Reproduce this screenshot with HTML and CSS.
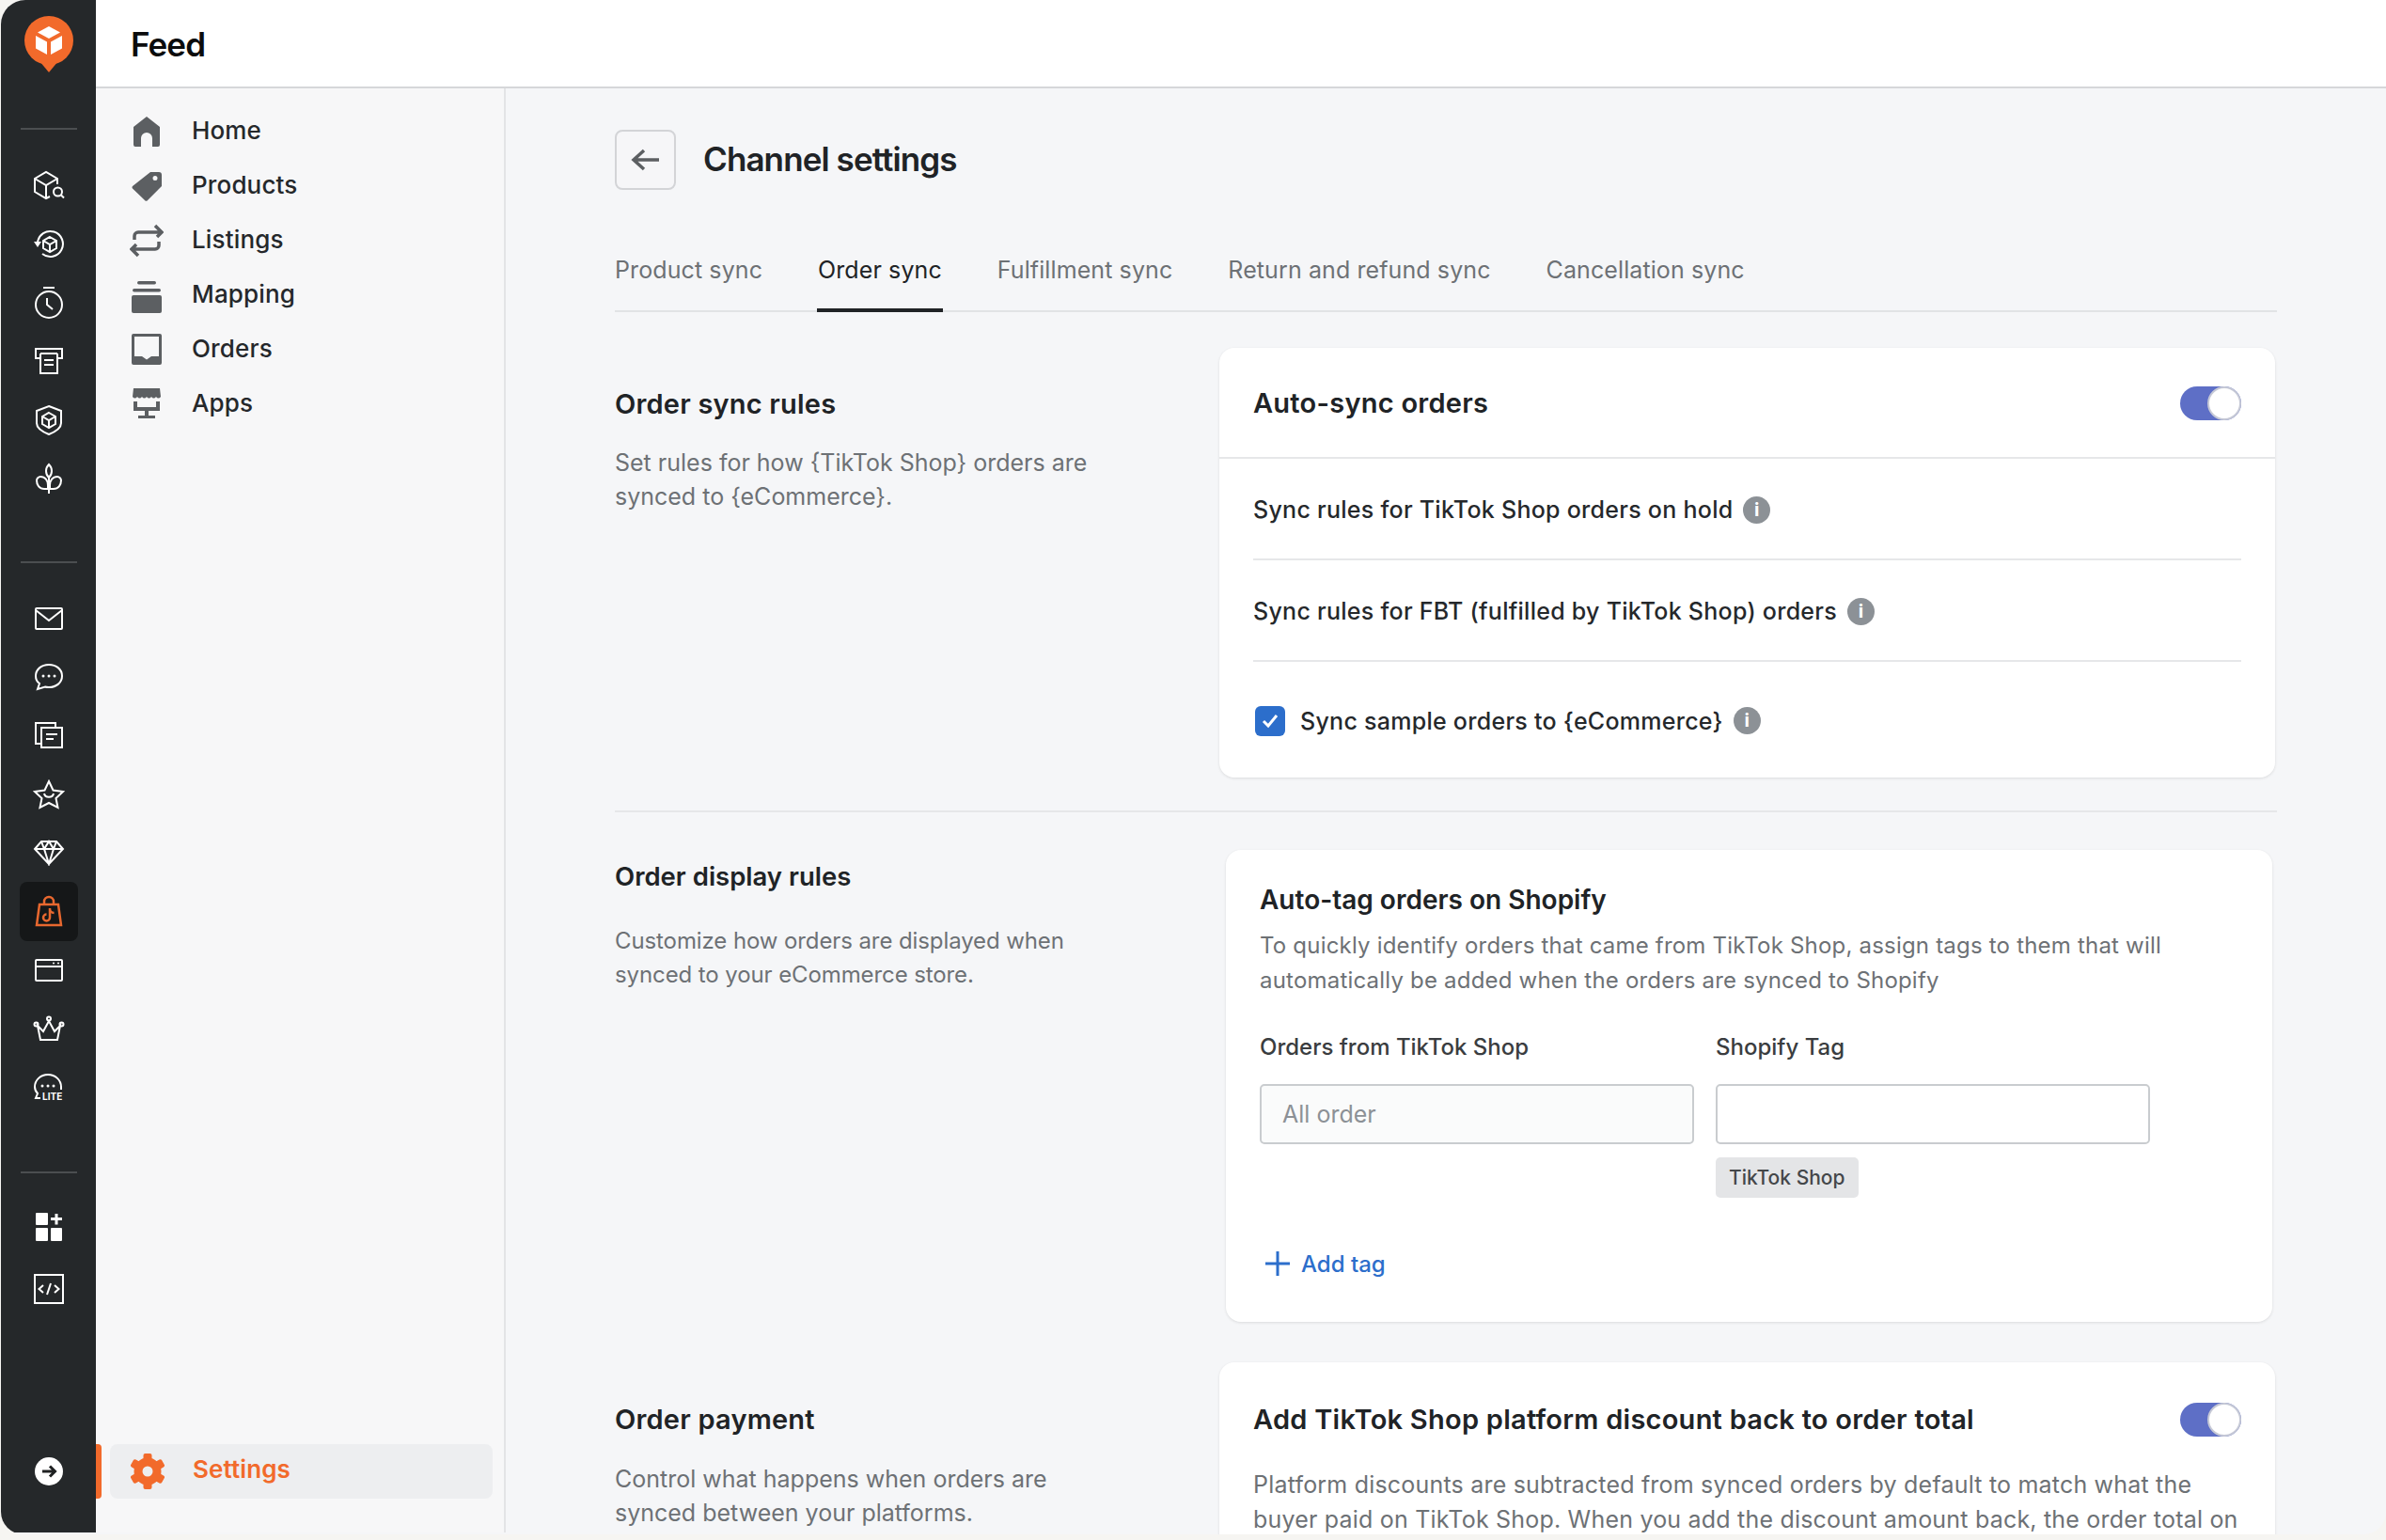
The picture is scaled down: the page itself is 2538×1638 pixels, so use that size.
FILE: index.html
```html
<!DOCTYPE html>
<html lang="en">
<head>
<meta charset="utf-8">
<title>Channel settings</title>
<link rel="stylesheet" href="styles.css">
</head>
<body>
<div class="frame">
  <nav class="rail">
    <div class="logo">
      <svg width="52" height="60" viewBox="0 0 52 60"><circle cx="26" cy="26" r="26" fill="#f26a2b"/><path d="M16 48L26 60L36 48Z" fill="#f26a2b"/><path d="M26 11L38 17.5L26 24L14 17.5Z" fill="#fff"/><path d="M12 21L24 27.5V41L12 34.5Z" fill="#fff"/><path d="M40 21L28 27.5V41L40 34.5Z" fill="#fff"/></svg>
    </div>
    <div class="rule rule-first"></div>
    <div class="rail-group">
      <a class="rail-btn"><svg class="ri ri-shift" width="36" height="32" viewBox="0 0 36 32"><path d="M26 15V9L14 2L2 9V23L14 30L18 28M2 9L14 16L26 9M14 16V30"/><circle cx="26.500" cy="23" r="4.500"/><path d="M30 26.500L33 29.500"/></svg></a>
      <a class="rail-btn"><svg class="ri" width="36" height="32" viewBox="0 0 36 32"><path d="M6 14A13.500 13.500 0 1 1 11 26"/><path d="M2 13H10L6 19Z" class="solid"/><path d="M19 8L26 12V20L19 24L12 20V12ZM12 12L19 16L26 12M19 16V24"/></svg></a>
      <a class="rail-btn"><svg class="ri" width="32" height="36" viewBox="0 0 32 36"><path d="M10 2H22"/><circle cx="16" cy="20" r="14"/><path d="M14 13V20L20 25"/></svg></a>
      <a class="rail-btn"><svg class="ri" width="32" height="32" viewBox="0 0 32 32"><path d="M7 13H2V3H30V13H25M7 8H25M7 8V29H25V8M11 15H21M11 20H21"/></svg></a>
      <a class="rail-btn"><svg class="ri" width="30" height="34" viewBox="0 0 30 34"><path d="M15 2L28 7V20C28 26 20 30 15 32C10 30 2 26 2 20V7Z"/><path d="M15 9L22 13V21L15 25L8 21V13ZM8 13L15 17L22 13M15 17V25"/></svg></a>
      <a class="rail-btn"><svg class="ri" width="30" height="34" viewBox="0 0 30 34"><path d="M15 2C11 6 11 12 15 16C19 12 19 6 15 2ZM15 16V33M14 28H10C5 28 2 24 2 19C2 17 4 15 6 15C11 15 14 19 14 24ZM16 28H20C25 28 28 24 28 19C28 17 26 15 24 15C19 15 16 19 16 24Z"/></svg></a>
    </div>
    <div class="rule rule-mid"></div>
    <div class="rail-group rail-group-tight">
      <a class="rail-btn"><svg class="ri" width="32" height="26" viewBox="0 0 32 26"><rect x="2" y="2" width="28" height="22" rx="1"/><path d="M2 4L16 15L30 4"/></svg></a>
      <a class="rail-btn"><svg class="ri" width="32" height="32" viewBox="0 0 32 32"><path d="M16 3C8 3 2 8 2 15C2 18 3 21 6 23L4 29L12 26.500C13 27 15 27 16 27C24 27 30 22 30 15C30 8 24 3 16 3Z"/><circle cx="10" cy="15" r="1.500" class="solid"/><circle cx="16" cy="15" r="1.500" class="solid"/><circle cx="22" cy="15" r="1.500" class="solid"/></svg></a>
      <a class="rail-btn"><svg class="ri" width="32" height="30" viewBox="0 0 32 30"><path d="M7 24H2V2H23V7"/><rect x="8" y="7" width="22" height="21"/><path d="M13 14H25M13 19H21"/></svg></a>
      <a class="rail-btn"><svg class="ri" width="34" height="32" viewBox="0 0 34 32"><path d="M17 2L21.500 11.500L32 13L24.500 20L26.500 30L17 25L7.500 30L9.500 20L2 13L12.500 11.500Z"/><path d="M12 15C13 20 21 20 22 15"/></svg></a>
      <a class="rail-btn"><svg class="ri" width="34" height="28" viewBox="0 0 34 28"><path d="M9 2H25L32 10L17 26L2 10ZM2 10H32M12 10L17 26L22 10L17 2ZM9 2L12 10M25 2L22 10"/></svg></a>
      <a class="rail-btn rail-btn-active"><svg class="ri ri-active" width="30" height="36" viewBox="0 0 30 36"><path d="M5 11H25L28 33H2Z"/><path d="M10 11V8A5 5 0 0 1 20 8V11"/><path d="M16 15V25A3.500 3.500 0 1 1 12.500 21.500M16 15.500C16 18 18 20 20.500 20"/></svg></a>
      <a class="rail-btn"><svg class="ri" width="32" height="26" viewBox="0 0 32 26"><rect x="2" y="2" width="28" height="22" rx="1"/><path d="M2 9H30"/><circle cx="21" cy="5.500" r="1" class="solid"/><circle cx="26" cy="5.500" r="1" class="solid"/></svg></a>
      <a class="rail-btn"><svg class="ri" width="34" height="28" viewBox="0 0 34 28"><path d="M5 11L11 17L17 6L23 17L29 11L26 26H8Z"/><circle cx="3.500" cy="9.500" r="2" /><circle cx="17" cy="3.500" r="2"/><circle cx="30.500" cy="9.500" r="2"/></svg></a>
      <a class="rail-btn"><svg class="ri" width="34" height="32" viewBox="0 0 34 32"><path d="M8 27H3L5 22C3 20 2 17 2 15C2 8 8 2 16 2C24 2 30 8 30 15V18"/><circle cx="10" cy="14" r="1.500" class="solid"/><circle cx="16" cy="14" r="1.500" class="solid"/><circle cx="22" cy="14" r="1.500" class="solid"/><text x="10" y="29" class="lite">LITE</text></svg></a>
    </div>
    <div class="rule rule-last"></div>
    <a class="rail-btn rail-btn-apps"><svg width="30" height="30" viewBox="0 0 30 30" class="rs"><rect x="1" y="0" width="13" height="13" rx="1"/><rect x="1" y="16" width="13" height="14" rx="1"/><rect x="17" y="16" width="12" height="14" rx="1"/><path d="M21.500 1H24.500V5H29V8H24.500V12.500H21.500V8H17V5H21.500Z"/></svg></a>
    <a class="rail-btn rail-btn-code"><svg class="ri" width="32" height="32" viewBox="0 0 32 32"><rect x="1" y="1" width="30" height="30"/><path d="M10 12L5.500 16L10 20M22 12L26.500 16L22 20M18 10L14 22"/></svg></a>
    <div class="rail-end"><svg width="30" height="30" viewBox="0 0 30 30"><circle cx="15" cy="15" r="15" fill="#fff"/><path d="M8 15H21M16 9.500L21.500 15L16 20.500" fill="none" stroke="#202223" stroke-width="3"/></svg></div>
  </nav>
  <div class="body">
    <header class="topbar"><h1 class="brand">Feed</h1></header>
    <div class="work">
      <aside class="side">
        <ul class="side-list">
          <li class="side-item"><svg class="si" width="32" height="32" viewBox="0 0 32 32"><path d="M16 0L30 11V30A2 2 0 0 1 28 32H22V23A6 6 0 0 0 10 23V32H4A2 2 0 0 1 2 30V11Z"/></svg><span>Home</span></li>
          <li class="side-item"><svg class="si" width="32" height="32" viewBox="0 0 32 32"><path fill-rule="evenodd" d="M20 1H29A3 3 0 0 1 32 4V16L17 31A2 2 0 0 1 14 31L1 18.500A2 2 0 0 1 1 16ZM25 5A2.500 2.500 0 1 0 25 10A2.500 2.500 0 1 0 25 5Z"/></svg><span>Products</span></li>
          <li class="side-item"><svg class="sl" width="36" height="36" viewBox="0 0 36 36"><path d="M5 17V13A4 4 0 0 1 9 9H33M27 2L34 9L29 14M31 19V23A4 4 0 0 1 27 27H3M9 34L2 27L7 22"/></svg><span>Listings</span></li>
          <li class="side-item"><svg class="si si-low" width="32" height="34" viewBox="0 0 32 34"><rect x="6" y="0" width="20" height="3.500" rx="1.700"/><rect x="1" y="8" width="30" height="3.500" rx="1.700"/><rect x="0" y="15" width="32" height="19" rx="2"/></svg><span>Mapping</span></li>
          <li class="side-item"><svg class="si" width="32" height="33" viewBox="0 0 32 33"><path fill-rule="evenodd" d="M2 0H30A2 2 0 0 1 32 2V31A2 2 0 0 1 30 33H2A2 2 0 0 1 0 31V2A2 2 0 0 1 2 0ZM3 3V24H11L16 27.500L21 24H29V3Z"/></svg><span>Orders</span></li>
          <li class="side-item"><svg class="si" width="32" height="33" viewBox="0 0 32 33"><path d="M2 0H30L31 9Q28.500 12 26 9Q23.500 12 21 9Q18.500 12 16 9Q13.500 12 11 9Q8.500 12 6 9Q3.500 12 1 9Z"/><path d="M2 14H6V20H26V14H30V24H18V29H25V32H7V29H14V24H2Z"/></svg><span>Apps</span></li>
        </ul>
        <div class="side-settings">
          <span class="side-mark"></span>
          <div class="side-active"><svg width="36" height="38" viewBox="0 0 36 38" class="gear"><g><rect x="13.500" y="0" width="9" height="38" rx="2"/><rect x="13.500" y="0" width="9" height="38" rx="2" transform="rotate(60 18 19)"/><rect x="13.500" y="0" width="9" height="38" rx="2" transform="rotate(120 18 19)"/></g><circle cx="18" cy="19" r="10" fill="none" stroke="#f26a2b" stroke-width="9"/><circle cx="18" cy="19" r="5.500" fill="#edeef0"/></svg><span class="side-label">Settings</span></div>
        </div>
      </aside>
      <main class="main">
        <div class="page-head">
          <button class="back"><svg width="32" height="26" viewBox="0 0 32 26"><path d="M30 13H4M14 3L3 13L14 23" fill="none" stroke="#5c5f62" stroke-width="3.500"/></svg></button>
          <h2 class="page-title">Channel settings</h2>
        </div>
        <div class="tabs">
          <span class="tab">Product sync</span>
          <span class="tab tab-on">Order sync</span>
          <span class="tab">Fulfillment sync</span>
          <span class="tab">Return and refund sync</span>
          <span class="tab">Cancellation sync</span>
        </div>

        <section class="sec sec-one">
          <div class="sec-left sec-left-one">
            <h3 class="sec-title">Order sync rules</h3>
            <p class="sec-desc">Set rules for how {TikTok Shop} orders are<br>synced to {eCommerce}.</p>
          </div>
          <div class="card">
            <div class="card-head"><h3 class="card-title">Auto-sync orders</h3><span class="toggle"><span class="knob"></span></span></div>
            <div class="rows">
              <div class="row"><span>Sync rules for TikTok Shop orders on hold</span><span class="info">i</span></div>
              <div class="row"><span>Sync rules for FBT (fulfilled by TikTok Shop) orders</span><span class="info">i</span></div>
              <div class="row row-last"><span class="check"><svg width="20" height="20" viewBox="0 0 20 20"><path d="M3 10L8 15L17 4" fill="none" stroke="#fff" stroke-width="3"/></svg></span><span>Sync sample orders to {eCommerce}</span><span class="info">i</span></div>
            </div>
          </div>
        </section>

        <div class="sep"></div>

        <section class="sec sec-two">
          <div class="sec-left sec-left-two">
            <h3 class="sec-title sec-title-sm">Order display rules</h3>
            <p class="sec-desc sec-desc-two">Customize how orders are displayed when<br>synced to your eCommerce store.</p>
          </div>
          <div class="card card-tag">
            <h3 class="card-title card-title-sm">Auto-tag orders on Shopify</h3>
            <p class="card-desc">To quickly identify orders that came from TikTok Shop, assign tags to them that will<br>automatically be added when the orders are synced to Shopify</p>
            <div class="fields">
              <label class="field-label">Orders from TikTok Shop</label>
              <label class="field-label">Shopify Tag</label>
              <div class="input input-off">All order</div>
              <div class="input"></div>
              <div class="field-spacer"></div>
              <div><span class="chip">TikTok Shop</span></div>
            </div>
            <div class="add"><svg width="28" height="28" viewBox="0 0 28 28"><path d="M14 1V27M1 14H27" stroke="#2c6ecb" stroke-width="3" fill="none"/></svg><span>Add tag</span></div>
          </div>
        </section>

        <section class="sec sec-three">
          <div class="sec-left sec-left-three">
            <h3 class="sec-title">Order payment</h3>
            <p class="sec-desc sec-desc-three">Control what happens when orders are<br>synced between your platforms.</p>
          </div>
          <div class="card card-pay">
            <div class="pay-head"><h3 class="card-title">Add TikTok Shop platform discount back to order total</h3><span class="toggle"><span class="knob"></span></span></div>
            <p class="pay-desc">Platform discounts are subtracted from synced orders by default to match what the<br>buyer paid on TikTok Shop. When you add the discount amount back, the order total on</p>
          </div>
        </section>
      </main>
    </div>
  </div>
</div>
</body>
</html>
```

FILE: styles.css
```css
* { box-sizing: border-box; }
html, body { margin: 0; padding: 0; }
body {
  width: 2538px;
  height: 1638px;
  overflow: hidden;
  background: #f6f5f2;
  font-family: Inter, "Liberation Sans", sans-serif;
  color: #202223;
}
h1, h2, h3, p, ul { margin: 0; padding: 0; }
ul { list-style: none; }

.frame {
  width: 2537px;
  height: 1632px;
  margin-left: 1px;
  display: flex;
  overflow: hidden;
  border-radius: 26px 0 24px 24px;
  background: #f5f6f8;
}

/* rail */
.rail {
  width: 101px;
  flex: none;
  background: #25282a;
  display: flex;
  flex-direction: column;
  align-items: center;
  margin-bottom: 2px;
}
.logo { height: 77px; margin-top: 17px; line-height: 0; }
.rule { width: 60px; height: 2px; background: #4b4e50; flex: none; }
.rule-first { margin-top: 42px; }
.rule-mid { margin-top: 57px; }
.rule-last { margin-top: 58px; }
.rail-group { margin-top: 28px; display: flex; flex-direction: column; align-items: center; }
.rail-group-tight { margin-top: 27px; }
.rail-btn {
  width: 62px;
  height: 62.4px;
  display: flex;
  align-items: center;
  justify-content: center;
  border-radius: 8px;
}
.rail-btn-active { background: #151718; }
.rail-btn-apps { margin-top: 26px; height: 62px; }
.rail-btn-code { margin-top: 4px; height: 62px; }
.ri { fill: none; stroke: #fff; stroke-width: 2; }
.ri .solid { fill: #fff; stroke: none; }
.ri-shift { margin-left: 3px; }
.ri-active { stroke: #e8682f; stroke-width: 2.500; }
.rs { fill: #fff; }
.lite { font-family: Inter, sans-serif; font-size: 10px; font-weight: 700; fill: #fff; stroke: none; }
.rail-end { margin-top: auto; margin-bottom: 50px; line-height: 0; }

/* body */
.body { flex: 1; min-width: 0; display: flex; flex-direction: column; }
.topbar {
  height: 94px;
  flex: none;
  background: #fff;
  border-bottom: 2px solid #d6d7d9;
  display: flex;
  align-items: center;
  padding: 2px 0 0 37px;
}
.brand { font-size: 35px; font-weight: 600; color: #0b0c0d; letter-spacing: -0.9px; }
.work { flex: 1; min-height: 0; display: flex; }

/* sidebar */
.side {
  width: 436px;
  flex: none;
  background: #f7f7f8;
  border-right: 2px solid #e3e4e6;
  display: flex;
  flex-direction: column;
  margin-bottom: 2px;
}
.side-list { padding-top: 15px; }
.side-item {
  height: 58px;
  display: flex;
  align-items: center;
  padding-left: 38px;
  font-size: 26px;
  font-weight: 500;
  color: #25282b;
  letter-spacing: 0.15px;
}
.si, .sl { flex: none; margin-right: 32px; }
.si { fill: #5c5f62; margin-top: 3px; }
.si-low { margin-top: 8px; }
.sl { fill: none; stroke: #5c5f62; stroke-width: 3.500; margin-left: -2px; margin-right: 30px; margin-top: 3px; }
.side-settings { margin-top: auto; margin-bottom: 36px; display: flex; align-items: stretch; height: 58px; }
.side-mark { width: 6px; background: #f26a2b; border-radius: 0 4px 4px 0; flex: none; }
.side-active {
  margin-left: 9px;
  width: 407px;
  background: #edeef0;
  border-radius: 8px;
  display: flex;
  align-items: center;
  padding-left: 22px;
  font-size: 26px;
  font-weight: 600;
  color: #f26a2b;
  letter-spacing: 0.1px;
}
.side-label { margin-bottom: 6px; }
.gear { fill: #f26a2b; margin-right: 30px; flex: none; }

/* main */
.main { flex: 1; min-width: 0; overflow: hidden; padding: 44px 116px 0 116px; }
.page-head { display: flex; align-items: center; gap: 29px; }
.back {
  width: 65px;
  height: 64px;
  border: 2px solid #d3d4d7;
  border-radius: 8px;
  background: #f6f6f8;
  padding: 0;
  display: flex;
  align-items: center;
  justify-content: center;
}
.page-title { font-size: 35px; font-weight: 600; color: #202326; letter-spacing: -0.9px; margin-top: -3px; }

.tabs {
  margin-top: 56px;
  height: 74px;
  display: flex;
  gap: 59px;
  border-bottom: 2px solid #e1e3e5;
}
.tab {
  font-size: 25px;
  line-height: 58px;
  height: 74px;
  color: #6d7175;
  letter-spacing: 0.1px;
}
.tab-on { color: #202326; border-bottom: 4px solid #202326; padding: 0 1px; margin: 0 -1px; }

.sec { display: flex; }
.sec-one { margin-top: 38px; }
.sec-left { width: 643px; flex: none; }
.sec-left-one { padding-top: 40px; }
.sec-title { font-size: 29px; font-weight: 600; line-height: 40px; color: #202326; letter-spacing: 0.2px; }
.sec-title-sm { font-size: 27.5px; letter-spacing: 0; }
.sec-desc { margin-top: 24px; font-size: 25px; line-height: 36px; color: #6d7175; }

.card {
  width: 1123px;
  flex: none;
  background: #fff;
  border-radius: 16px;
  box-shadow: 0 1px 3px rgba(32, 34, 35, 0.12);
}
.card-head {
  height: 118px;
  border-bottom: 2px solid #e6e7e9;
  padding: 2px 36px 0;
  display: flex;
  align-items: center;
  justify-content: space-between;
}
.card-title { font-size: 29px; font-weight: 600; line-height: 40px; color: #202326; letter-spacing: 0.25px; }
.card-title-sm { font-size: 28px; letter-spacing: 0; }
.toggle {
  width: 65px;
  height: 36px;
  border-radius: 18px;
  background: #5e6fc6;
  display: flex;
  justify-content: flex-end;
  flex: none;
}
.knob {
  width: 36px;
  height: 36px;
  border-radius: 50%;
  background: #fff;
  border: 2px solid #c6c9d6;
}
.rows { padding: 0 36px; }
.row {
  height: 108px;
  padding-top: 2px;
  border-bottom: 2px solid #e6e7e9;
  display: flex;
  align-items: center;
  gap: 11px;
  font-size: 25px;
  font-weight: 500;
  color: #25282b;
  letter-spacing: 0.27px;
}
.row-last { height: 123px; border-bottom: 0; }
.info {
  width: 29px;
  height: 29px;
  border-radius: 50%;
  background: #8c9196;
  color: #fff;
  font-size: 20px;
  font-weight: 700;
  line-height: 29px;
  text-align: center;
  flex: none;
}
.check {
  width: 32px;
  height: 32px;
  border-radius: 6px;
  background: #2c6ecb;
  display: flex;
  align-items: center;
  justify-content: center;
  margin-right: 5px;
  margin-left: 2px;
}

.sep { height: 2px; background: #e6e7e9; margin-top: 35px; }

.sec-two { margin-top: 40px; }
.sec-left-two { padding-top: 8px; width: 650px; }
.sec-desc-two { margin-top: 31px; font-size: 24px; letter-spacing: -0.1px; }
.card-tag { width: 1113px; padding: 33px 36px 44px; }
.card-desc { margin-top: 10px; font-size: 24px; line-height: 37px; color: #6d7175; letter-spacing: 0.2px; }
.fields {
  margin-top: 35px;
  display: grid;
  grid-template-columns: 462px 462px;
  column-gap: 23px;
}
.field-label { font-size: 24px; line-height: 36px; font-weight: 500; color: #3a3d40; margin-bottom: 21px; }
.input {
  height: 64px;
  border: 2px solid #c9cccf;
  border-radius: 5px;
  background: #fff;
  padding-left: 22px;
  display: flex;
  align-items: center;
  font-size: 25px;
  color: #8c9196;
}
.input-off { background: #fafbfb; }
.chip {
  display: inline-block;
  margin-top: 14px;
  height: 43px;
  line-height: 43px;
  padding: 0 14px;
  border-radius: 5px;
  background: #e4e5e7;
  font-size: 21px;
  font-weight: 500;
  color: #44474a;
}
.add {
  margin-top: 52px;
  display: flex;
  align-items: center;
  gap: 11px;
  padding-left: 5px;
  height: 36px;
  font-size: 24px;
  font-weight: 500;
  color: #2c6ecb;
}

.sec-three { margin-top: 43px; }
.sec-left-three { padding-top: 41px; }
.sec-desc-three { margin-top: 25px; }
.card-pay { padding: 41px 36px 30px; }
.pay-head { display: flex; align-items: center; justify-content: space-between; }
.pay-desc { margin-top: 31px; font-size: 25px; line-height: 37px; color: #6d7175; letter-spacing: 0.2px; }
```
